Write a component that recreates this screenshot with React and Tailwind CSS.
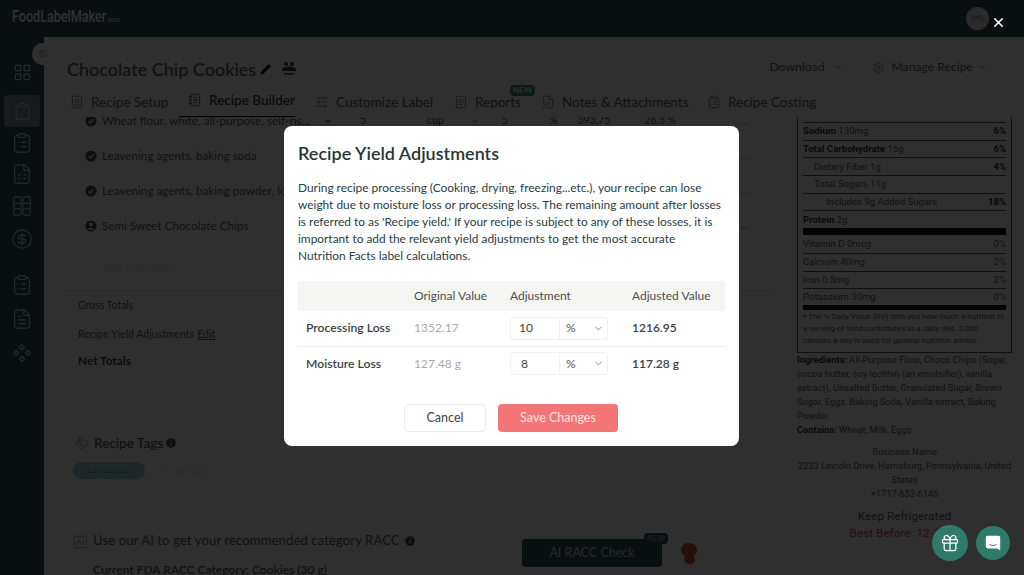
import React from "react";
import {
  ChevronDown,
  CircleDollarSign,
  Clipboard,
  ClipboardList,
  FilePen,
  FileSpreadsheet,
  FileText,
  Gift,
  LayoutGrid,
  NotebookText,
  PanelLeft,
  Pencil,
  Plus,
  ReceiptText,
  Settings,
  SlidersHorizontal,
  Tags,
  X,
} from "lucide-react";

const ColumnsIcon = ({ size, strokeWidth, className }) => (
  <svg viewBox="0 0 24 24" width={size} height={size} fill="none" stroke="currentColor" strokeWidth={strokeWidth} className={className}>
    <rect x="3" y="2" width="8" height="20" rx="2" />
    <rect x="13" y="2" width="8" height="20" rx="2" />
    <path d="M3 9h8M3 15h8M13 9h8M13 15h8" />
  </svg>
);

const SetupIcon = ({ size, strokeWidth, className }) => (
  <svg viewBox="0 0 24 24" width={size} height={size} fill="none" stroke="currentColor" strokeWidth={strokeWidth} className={className}>
    <rect x="4" y="2" width="16" height="20" rx="2" />
    <circle cx="12" cy="10" r="3.2" />
    <path d="M7 19c1-3 9-3 10 0" />
  </svg>
);

const CheckBadge = () => (
  <svg viewBox="0 0 12 12" width="12" height="12" className="shrink-0">
    <circle cx="6" cy="6" r="5.6" fill="#3a4042" />
    <path d="M3.4 6.1l1.8 1.8 3.4-3.6" fill="none" stroke="#bdbdbd" strokeWidth="1.3" />
  </svg>
);

const UserBadge = () => (
  <svg viewBox="0 0 12 12" width="12" height="12" className="shrink-0">
    <circle cx="6" cy="6" r="5.6" fill="#3a4042" />
    <circle cx="6" cy="4.6" r="1.8" fill="#bdbdbd" />
    <path d="M2.8 9.4c1-2 5.4-2 6.4 0" fill="#bdbdbd" />
  </svg>
);

const InfoDot = ({ className }) => (
  <svg viewBox="0 0 10 10" width="10" height="10" className={className}>
    <circle cx="5" cy="5" r="4.8" fill="#3a4042" />
    <path d="M5 4.4v3M5 2.4v1" stroke="#bdbdbd" strokeWidth="1.1" />
  </svg>
);

const sideIcons = [
  { Icon: ClipboardList, cls: "mt-[5px]" },
  { Icon: FileSpreadsheet, cls: "mt-[9px]" },
  { Icon: ColumnsIcon, cls: "mt-[10px]" },
  { Icon: CircleDollarSign, cls: "mt-[11px]" },
  { Icon: ClipboardList, cls: "mt-[24px]" },
  { Icon: FileText, cls: "mt-[12px]" },
];

const tabs = [
  { label: "Recipe Setup", Icon: SetupIcon, width: "w-[118px]" },
  { label: "Recipe Builder", Icon: NotebookText, width: "w-[127px]", active: true },
  { label: "Customize Label", Icon: SlidersHorizontal, width: "w-[139px]" },
  { label: "Reports", Icon: ReceiptText, width: "w-[87px]", badge: true },
  { label: "Notes & Attachments", Icon: FilePen, width: "w-[166px]" },
  { label: "Recipe Costing", Icon: ClipboardList, width: "w-[110px]" },
];

const ingredients = [
  { name: "Wheat flour, white, all-purpose, self-ris...", Badge: CheckBadge, first: true },
  { name: "Leavening agents, baking soda", Badge: CheckBadge },
  { name: "Leavening agents, baking powder, low...", Badge: CheckBadge },
  { name: "Semi Sweet Chocolate Chips", Badge: UserBadge },
];

const facts = [
  { label: "Sodium", value: "130mg", pct: "6%", bold: true },
  { label: "Total Carbohydrate", value: "16g", pct: "6%", bold: true },
  { label: "Dietary Fiber", value: "1g", pct: "4%", indent: "pl-[11px]" },
  { label: "Total Sugars", value: "11g", indent: "pl-[11px]" },
  { label: "Includes 9g Added Sugars", pct: "18%", indent: "pl-[23px]" },
  { label: "Protein", value: "2g", bold: true },
];

const vitamins = [
  ["Vitamin D 0mcg", "0%"],
  ["Calcium 40mg", "2%"],
  ["Iron 0.5mg", "2%"],
  ["Potassium 30mg", "0%"],
];

const yields = [
  { name: "Processing Loss", original: "1352.17", amount: "10", adjusted: "1216.95" },
  { name: "Moisture Loss", original: "127.48 g", amount: "8", adjusted: "117.28 g" },
];

function Sidebar() {
  return (
    <aside className="w-[44px] shrink-0 bg-[#263c43] flex flex-col items-center pt-[26px] text-[#93a4a8]">
      <LayoutGrid size={19} strokeWidth={1.4} />
      <div className="mt-[13px] w-[36px] h-[32px] rounded bg-[#5d6b6f] flex items-center justify-center">
        <Clipboard size={19} strokeWidth={1.4} />
      </div>
      {sideIcons.map(({ Icon, cls }, i) => (
        <Icon key={i} size={22} strokeWidth={1.2} className={cls} />
      ))}
      <svg viewBox="0 0 24 24" width="20" height="20" fill="none" stroke="currentColor" strokeWidth="1.4" className="mt-[13px]">
        <path d="M12 2l3 3-3 3-3-3zM5 9l3 3-3 3-3-3zM19 9l3 3-3 3-3-3zM12 16l3 3-3 3-3-3z" />
      </svg>
    </aside>
  );
}

function Tabs() {
  return (
    <div className="flex h-[30px] pl-[26px] shrink-0">
      {tabs.map(({ label, Icon, width, active, badge }) => (
        <div key={label} className={`${width} shrink-0 h-[30px] flex items-center relative`}>
          <div className={`flex items-center gap-[7px] h-full ${active ? "-ml-[9px] pl-[9px] border-b border-[#111] font-semibold text-[#333] pb-[3px]" : "text-[#444a4c]"}`}>
            <Icon size={14} strokeWidth={1.3} />
            <span className="text-[13.5px] whitespace-nowrap">{label}</span>
          </div>
          {badge && (
            <span className="absolute left-[56px] -top-[2px] w-[25px] h-[11px] rounded-sm bg-[#2f6b63] text-[#c0d8d0] text-[8px] leading-[11px] text-center">
              NEW
            </span>
          )}
        </div>
      ))}
    </div>
  );
}

function Ingredients() {
  return (
    <div className="-mt-[14px]">
      {ingredients.map(({ name, Badge, first }) => (
        <div key={name} className="h-[35px] pl-[41px] flex items-center text-[#444a4c] relative">
          <Badge />
          <span className="ml-[5px] text-[11.5px] tracking-[0.1px] whitespace-nowrap">{name}</span>
          <span className="absolute left-[696px] text-[9px] tracking-[1px]">...</span>
          {first && (
            <div className="absolute left-[274px] top-0 h-full flex items-center text-[10.5px]">
              <ChevronDown size={10} strokeWidth={3} className="ml-[5px]" />
              <span className="ml-[27px]">5</span>
              <span className="ml-[61px]">cup</span>
              <ChevronDown size={10} className="ml-[26px]" />
              <span className="ml-[22px]">5</span>
              <span className="ml-[41px]">%</span>
              <span className="ml-[20px]">393.75</span>
              <span className="ml-[34px]">26.3 %</span>
            </div>
          )}
        </div>
      ))}
      <div className="h-[47px] pl-[58px] flex items-center text-[11.5px] text-[#a3a3a3]">Add Ingredient</div>
    </div>
  );
}

function Totals() {
  return (
    <div className="ml-[19px] -mr-[14px] border-t border-[#a0a0a0] pl-[15px] text-[#444a4c]">
      <div className="h-[29px] flex items-center text-[10.5px]">Gross Totals</div>
      <div className="h-[29px] flex items-center text-[10.5px] gap-[3px]">
        Recipe Yield Adjustments <span className="underline">Edit</span>
      </div>
      <div className="h-[24px] flex items-center text-[11.8px] font-bold text-[#333]">Net Totals</div>
    </div>
  );
}

function RecipeTags() {
  return (
    <div className="mt-[60px] pl-[32px] -mr-[10px]">
      <div className="flex items-center h-[20px] text-[#444a4c]">
        <Tags size={13} strokeWidth={1.3} />
        <span className="ml-[5px] text-[13.5px] font-semibold">Recipe Tags</span>
        <InfoDot className="ml-[3px]" />
      </div>
      <div className="mt-[9px] -ml-[3px] flex items-center h-[17px]">
        <span className="w-[72px] h-[17px] rounded-full bg-[#7a9aa2] text-[#5a7078] text-[8px] leading-[17px] text-center">Low Sodium</span>
        <span className="ml-[18px] flex items-center gap-[5px] text-[8px] text-[#a3a3a3]">
          <Plus size={7} /> Add Tag
        </span>
      </div>
      <div className="mt-[14px] -ml-[13px] h-[15px] border-y border-[#b4b4b4]" />
    </div>
  );
}

function RaccSection() {
  return (
    <div className="mt-[23px] pl-[29px] flex items-center">
      <div className="w-[449px] shrink-0 text-[#444a4c]">
        <div className="flex items-center h-[20px]">
          <svg viewBox="0 0 16 16" width="15" height="16" fill="none" stroke="#8a7a45" strokeWidth="1">
            <rect x="1.5" y="3" width="13" height="12" rx="1" />
            <path d="M5 1v3M11 1v3M4.5 12l2-5 2 5M11 7v5" />
          </svg>
          <span className="ml-[5px] text-[13.1px] tracking-[0.1px]">Use our AI to get your recommended category RACC</span>
          <InfoDot className="ml-[5px]" />
        </div>
        <div className="mt-[10px] ml-[20px] h-[20px] text-[12px] font-semibold">
          Current FDA RACC Category: Cookies (30 g)
        </div>
      </div>
      <button className="relative -mt-[6px] w-[140px] h-[28px] rounded bg-[#263c43] text-[#90a0a3] text-[12.5px]">
        AI RACC Check
        <span className="absolute -top-[6px] right-[-6px] w-[24px] h-[11px] rounded-sm bg-[#263c43] text-[7.5px] leading-[11px] text-[#6f8487]">NEW</span>
      </button>
      <div className="-mt-[6px] ml-[18px] w-[18px] flex flex-col items-center">
        <div className="w-[16px] h-[14px] rounded-full bg-[#8a4a2c]" />
        <div className="-mt-[2px] w-[11px] h-[9px] rounded-full bg-[#8a4a2c]" />
      </div>
    </div>
  );
}

function LabelPreview() {
  return (
    <div className="w-[215px] shrink-0 ml-[39px] font-['Roboto',sans-serif] text-[#444a4c]">
      <div className="border-x border-b border-[#444] px-[5px] pt-[5px] pb-[5px] text-[9.6px]">
        {facts.map(({ label, value, pct, bold, indent }) => (
          <div key={label} className={`h-[17.7px] flex items-center justify-between border-t border-[#444] ${indent || ""}`}>
            <span className="whitespace-nowrap">
              <span className={bold ? "font-bold text-[#2a2a2a]" : ""}>{label}</span> {value}
            </span>
            {pct && <span className="font-bold text-[#2a2a2a]">{pct}</span>}
          </div>
        ))}
        <div className="h-[7px] bg-black" />
        {vitamins.map(([label, pct], i) => (
          <div key={label} className={`h-[17.7px] flex items-center justify-between ${i ? "border-t border-[#444]" : ""}`}>
            <span>{label}</span>
            <span>{pct}</span>
          </div>
        ))}
        <div className="h-[5px] -mt-[1px] bg-black" />
        <p className="mt-[1px] text-[8px] leading-[12px]">
          * The % Daily Value (DV) tells you how much a nutrient in a serving of food contributes to a daily diet. 2,000 calories a day is used for general nutrition advice.
        </p>
      </div>
      <div className="text-[9.3px] leading-[14px]">
        <p>
          <b className="text-[#2a2a2a]">Ingredients:</b> All-Purpose Flour, Choco Chips (Sugar, cocoa butter, soy lecithin (an emulsifier), vanilla extract), Unsalted Butter, Granulated Sugar, Brown Sugar, Eggs, Baking Soda, Vanilla extract, Baking Powder
        </p>
        <p>
          <b className="text-[#2a2a2a]">Contains:</b> Wheat, Milk, Eggs
        </p>
        <div className="mt-[8px] text-center">
          <p>Business Name</p>
          <p>2233 Lincoln Drive, Harrisburg, Pennsylvania, United States</p>
          <p>+1717-652-6146</p>
        </div>
      </div>
      <p className="mt-[7px] text-center text-[11.8px] leading-[17px]">Keep Refrigerated</p>
      <p className="text-center text-[11.8px] leading-[17px] text-[#a33a3a]">Best Before: 12-2025</p>
    </div>
  );
}

function YieldModal() {
  return (
    <div className="w-[455px] h-[320px] mt-[126px] ml-[284px] rounded-lg bg-white px-[14px] text-[#2f3f42]">
      <h2 className="pt-[16px] text-[18px] leading-[22px] font-semibold text-[#2c3436]">Recipe Yield Adjustments</h2>
      <p className="mt-[15px] text-[11.9px] leading-[17px] text-[#28403f]">
        During recipe processing (Cooking, drying, freezing...etc.), your recipe can lose weight due to moisture loss or processing loss. The remaining amount after losses is referred to as 'Recipe yield.' If your recipe is subject to any of these losses, it is important to add the relevant yield adjustments to get the most accurate Nutrition Facts label calculations.
      </p>
      <table className="mt-[17px] w-[427px] table-fixed text-[12px]">
        <thead>
          <tr className="h-[30px] bg-[#f5f5f2] text-[#4a4f50] text-left font-normal">
            <th className="w-[116px]" />
            <th className="w-[96px] font-normal">Original Value</th>
            <th className="w-[122px] font-normal">Adjustment</th>
            <th className="font-normal">Adjusted Value</th>
          </tr>
        </thead>
        <tbody>
          {yields.map((row, i) => (
            <tr key={row.name} className={`h-[35px] ${i === 0 ? "border-b border-[#ededed]" : ""}`}>
              <td className="pl-[8px] font-semibold text-[#3d4344] text-[12.2px]">{row.name}</td>
              <td className="text-[#aaaaaa]">{row.original}</td>
              <td>
                <div className="flex h-[23px] w-[98px]">
                  <input
                    readOnly
                    value={row.amount}
                    className={`w-[50px] border border-[#f1f1f1] rounded-l text-[12px] text-[#444] outline-none ${i === 0 ? "pl-[8px]" : "pl-[10px]"}`}
                  />
                  <div className="flex-1 border-y border-r border-[#f1f1f1] rounded-r flex items-center justify-between pl-[6px] pr-[3px] text-[#555] text-[12px]">
                    %
                    <ChevronDown size={11} className="text-[#888]" />
                  </div>
                </div>
              </td>
              <td className="font-semibold text-[#3d4344]">{row.adjusted}</td>
            </tr>
          ))}
        </tbody>
      </table>
      <div className="mt-[23px] flex justify-center gap-[12px] pr-[1px]">
        <button className="w-[82px] h-[28px] rounded border border-[#ececec] text-[12.5px] text-[#444]">Cancel</button>
        <button className="w-[120px] h-[28px] rounded bg-[#f47575] text-[12.5px] text-[#fde4e4]">Save Changes</button>
      </div>
    </div>
  );
}

export default function App() {
  return (
    <div className="relative w-[1024px] h-[575px] overflow-hidden flex flex-col font-['Lato',sans-serif]">
      <header className="h-[37px] shrink-0 bg-[#263c43] flex items-center justify-between pl-[12px] pr-[35px]">
        <span className="font-['Roboto',sans-serif] text-[17px] font-medium text-[#c0c0c0] -mt-[3px] scale-x-[0.74] origin-left whitespace-nowrap">
          FoodLabelMaker<span className="text-[8px] font-normal">.com</span>
        </span>
        <div className="w-[23px] h-[23px] rounded-full bg-[#aaa] text-[#666] text-[8px] leading-[23px] text-center">MS</div>
      </header>

      <div className="flex flex-1 min-h-0">
        <Sidebar />
        <main className="relative flex-1 min-w-0 bg-[#bdbdbd] flex flex-col">
          <span className="absolute -left-[12px] top-[6px] w-[22px] h-[22px] rounded-full bg-[#bdbdbd] flex items-center justify-center text-[#666]">
            <PanelLeft size={8} />
          </span>
          <div className="h-[50px] shrink-0 pl-[23px] pr-[37px] pt-[19px] flex items-start justify-between text-[#444a4c]">
            <div className="flex items-center gap-[4px]">
              <h1 className="text-[18px] leading-[26px] font-medium">Chocolate Chip Cookies</h1>
              <Pencil size={11} fill="#111" className="text-[#111]" />
              <svg viewBox="0 0 16 16" width="16" height="16" fill="#333" className="ml-[6px]">
                <circle cx="5" cy="3" r="2" />
                <circle cx="11" cy="3" r="2" />
                <path d="M1 9c0-3 4-3.5 7-3.5S15 6 15 9v1H1zM3 12h10v1.5H3z" />
              </svg>
            </div>
            <div className="flex items-center text-[12.2px] h-[22px]">
              <span>Download</span>
              <ChevronDown size={10} className="ml-[9px]" />
              <Settings size={13} strokeWidth={1.3} className="ml-[29px]" />
              <span className="ml-[6px]">Manage Recipe</span>
              <ChevronDown size={10} className="ml-[4px]" />
            </div>
          </div>
          <Tabs />
          <div className="flex-1 min-h-0 overflow-hidden flex">
            <div className="w-[714px] shrink-0">
              <Ingredients />
              <Totals />
              <RecipeTags />
              <RaccSection />
            </div>
            <LabelPreview />
          </div>
        </main>
      </div>

      {/* dimmed page + dialog */}
      <div className="absolute inset-0 bg-black/75 backdrop-blur-[0.6px]">
        <YieldModal />
      </div>

      <X size={15} strokeWidth={2.5} className="absolute top-[15px] right-[18px] text-white" />
      <button className="absolute left-[932px] top-[525px] w-[36px] h-[36px] rounded-full bg-[#2f7a68] flex items-center justify-center text-white">
        <Gift size={20} strokeWidth={1.5} />
      </button>
      <button className="absolute left-[976px] top-[526px] w-[34px] h-[34px] rounded-full bg-[#2f7a68] flex items-center justify-center">
        <svg viewBox="0 0 20 20" width="18" height="18">
          <path d="M4 2h12a2 2 0 0 1 2 2v14l-4-2H4a2 2 0 0 1-2-2V4a2 2 0 0 1 2-2z" fill="#fff" />
          <path d="M6 11.5c2.5 1.5 5.5 1.5 8 0" stroke="#2f7a68" strokeWidth="1.2" fill="none" />
        </svg>
      </button>
    </div>
  );
}
